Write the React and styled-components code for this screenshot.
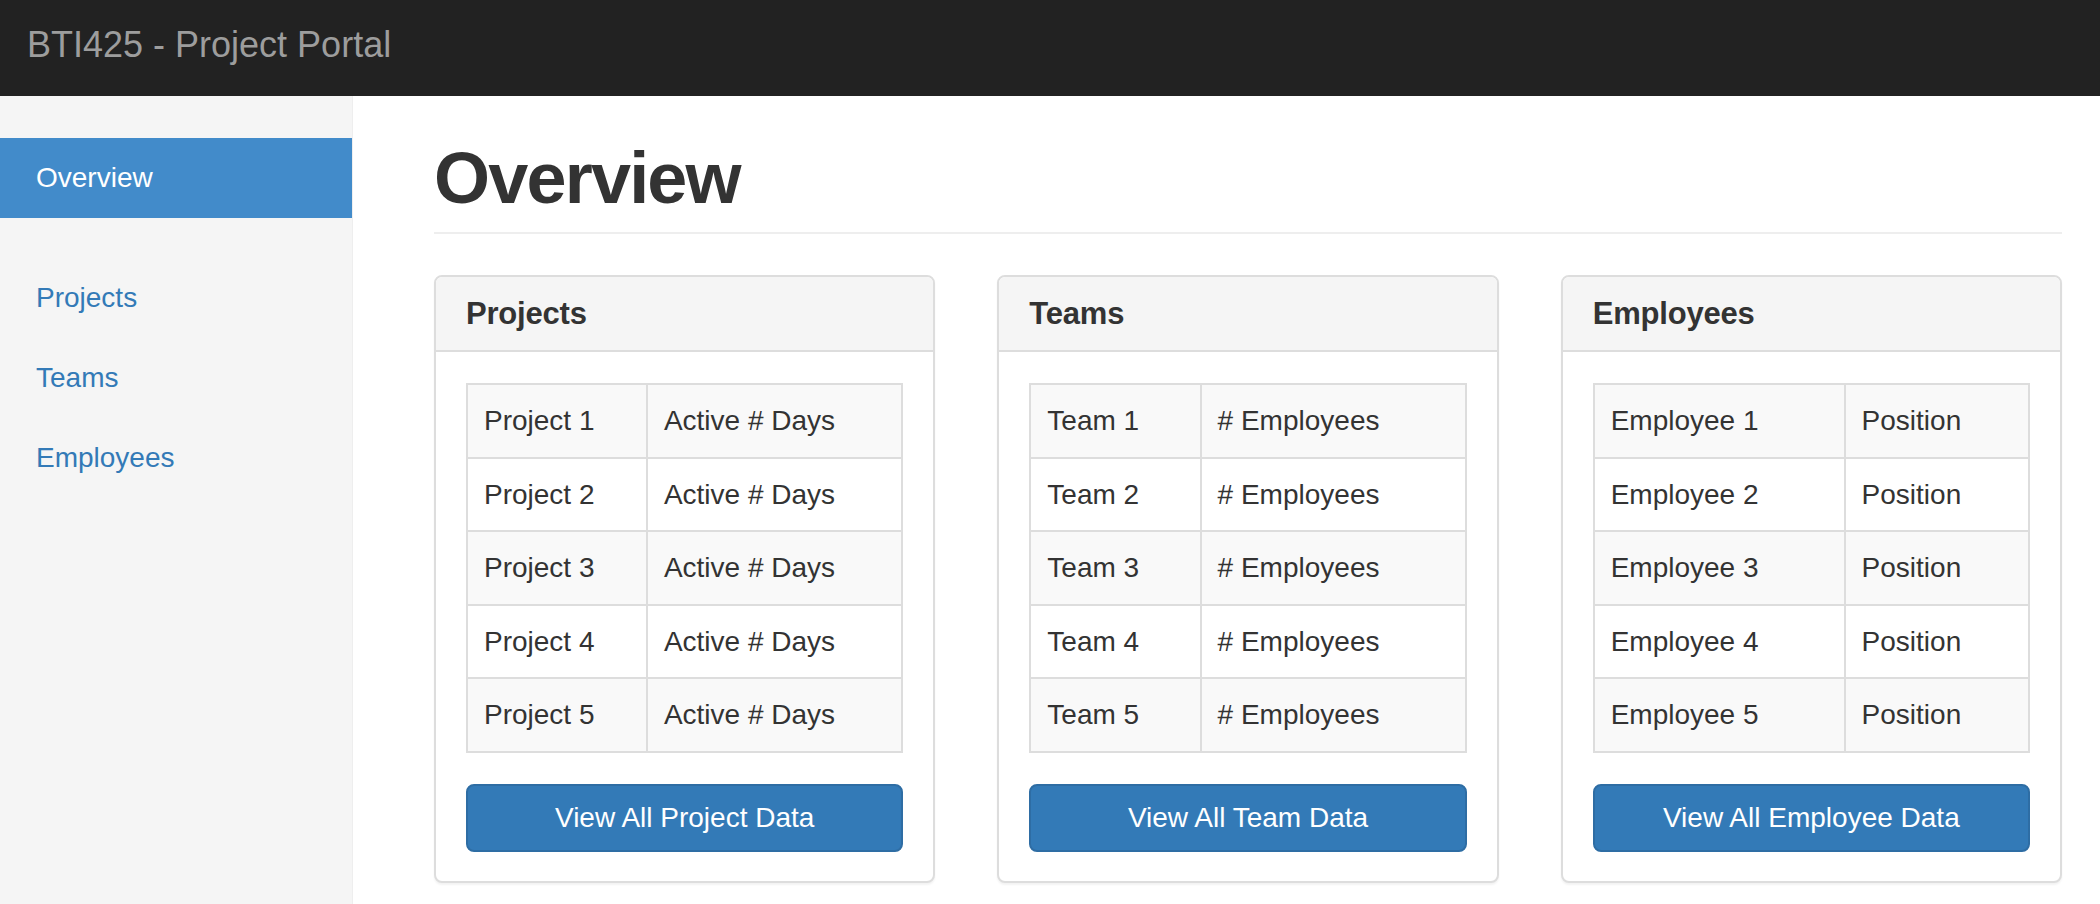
import React from 'react'
import styled, { createGlobalStyle } from 'styled-components'

const GlobalStyle = createGlobalStyle`
  html, body {
    margin: 0;
    padding: 0;
    background: #fff;
  }

  body {
    font-family: "Liberation Sans", Helvetica, Arial, sans-serif;
    color: #333;
  }

  * {
    box-sizing: border-box;
  }
`

const Navbar = styled.header`
  height: 96px;
  background: #222;
  display: flex;
  align-items: center;
  padding: 0 27px 6px;
`

const Brand = styled.a`
  font-size: 36px;
  line-height: 40px;
  color: #9d9d9d;
  text-decoration: none;
`

const Layout = styled.div`
  display: flex;
  min-height: calc(100vh - 96px);
`

const Sidebar = styled.aside`
  width: 353px;
  flex-shrink: 0;
  background: #f5f5f5;
  border-right: 1px solid #eee;
  padding-top: 42px;
`

const NavList = styled.ul`
  list-style: none;
  margin: 0 0 40px;
  padding: 0;
`

const NavLink = styled.a`
  display: block;
  height: 80px;
  line-height: 80px;
  padding: 0 36px;
  font-size: 28px;
  text-decoration: none;
  color: ${p => (p.$active ? '#fff' : '#337ab7')};
  background: ${p => (p.$active ? '#428bca' : 'transparent')};
`

const Main = styled.main`
  flex: 1;
  padding: 42px 38px 20px 81px;
`

const PageHeader = styled.h1`
  margin: 0 0 41px;
  font-size: 72px;
  font-weight: 700;
  letter-spacing: -1.8px;
  line-height: 80px;
  padding-bottom: 14px;
  border-bottom: 2px solid #eee;
  color: #333;
`

const PanelRow = styled.div`
  display: grid;
  grid-template-columns: repeat(3, 1fr);
  column-gap: 62px;
`

const Panel = styled.section`
  background: #fff;
  border: 2px solid #ddd;
  border-radius: 8px;
  box-shadow: 0 2px 2px rgba(0, 0, 0, 0.05);
  overflow: hidden;
`

const PanelHeading = styled.div`
  height: 75px;
  display: flex;
  align-items: center;
  padding: 0 30px;
  background: #f5f5f5;
  border-bottom: 2px solid #ddd;
`

const PanelTitle = styled.h3`
  margin: 0;
  font-size: 31px;
  font-weight: 700;
  letter-spacing: -0.2px;
  color: #333;
`

const PanelBody = styled.div`
  padding: 31px 30px 29px;
`

const Table = styled.table`
  width: 100%;
  border-collapse: collapse;
  border: 2px solid #ddd;
  margin-bottom: 31px;

  & td {
    border: 2px solid #ddd;
    padding: 16px 16px;
    font-size: 28px;
    line-height: 39.6px;
    white-space: nowrap;
  }

  & tr:nth-child(odd) td {
    background: #f9f9f9;
  }
`

const Button = styled.a`
  display: flex;
  align-items: center;
  justify-content: center;
  height: 68px;
  background: #337ab7;
  border: 2px solid #2e6da4;
  border-radius: 8px;
  color: #fff;
  font-size: 28px;
  text-decoration: none;
`

const panels = [
  { title: 'Projects', item: 'Project', value: 'Active # Days', button: 'View All Project Data' },
  { title: 'Teams', item: 'Team', value: '# Employees', button: 'View All Team Data' },
  { title: 'Employees', item: 'Employee', value: 'Position', button: 'View All Employee Data' },
]

export default function App() {
  return (
    <>
      <GlobalStyle />
      <Navbar>
        <Brand href="#">BTI425 - Project Portal</Brand>
      </Navbar>
      <Layout>
        <Sidebar>
          <NavList>
            <li><NavLink href="#" $active>Overview</NavLink></li>
          </NavList>
          <NavList>
            <li><NavLink href="#">Projects</NavLink></li>
            <li><NavLink href="#">Teams</NavLink></li>
            <li><NavLink href="#">Employees</NavLink></li>
          </NavList>
        </Sidebar>
        <Main>
          <PageHeader>Overview</PageHeader>
          <PanelRow>
            {panels.map(p => (
              <Panel key={p.title}>
                <PanelHeading>
                  <PanelTitle>{p.title}</PanelTitle>
                </PanelHeading>
                <PanelBody>
                  <Table>
                    <tbody>
                      {[1, 2, 3, 4, 5].map(n => (
                        <tr key={n}>
                          <td>{p.item} {n}</td>
                          <td>{p.value}</td>
                        </tr>
                      ))}
                    </tbody>
                  </Table>
                  <Button href="#">{p.button}</Button>
                </PanelBody>
              </Panel>
            ))}
          </PanelRow>
        </Main>
      </Layout>
    </>
  )
}
